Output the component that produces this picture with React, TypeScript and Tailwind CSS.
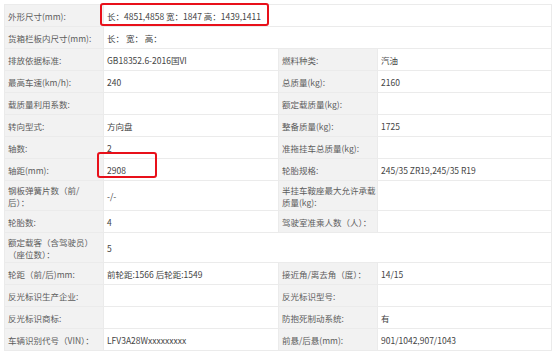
import React from "react";

type Cell = { t: React.ReactNode; label?: boolean; span?: number };

const L = (t: React.ReactNode): Cell => ({ t, label: true });
const V = (t: React.ReactNode, span?: number): Cell => ({ t, span });

const rows: Cell[][] = [
  [L("外形尺寸(mm):"), V("长：4851,4858 宽：1847 高：1439,1411", 3)],
  [L("货箱栏板内尺寸(mm):"), V(<>长：&nbsp;宽：&nbsp;高：</>, 3)],
  [L("排放依据标准:"), V("GB18352.6-2016国VI"), L("燃料种类:"), V("汽油")],
  [L("最高车速(km/h):"), V("240"), L("总质量(kg):"), V("2160")],
  [L("载质量利用系数:"), V(""), L("额定载质量(kg):"), V("")],
  [L("转向型式:"), V("方向盘"), L("整备质量(kg):"), V("1725")],
  [L("轴数:"), V("2"), L("准拖挂车总质量(kg):"), V("")],
  [L("轴距(mm):"), V("2908"), L("轮胎规格:"), V("245/35 ZR19,245/35 R19")],
  [
    L(<>钢板弹簧片数（前/<br />后）：</>),
    V("-/-"),
    L(<>半挂车鞍座最大允许承载<br />质量(kg):</>),
    V(""),
  ],
  [L("轮胎数:"), V("4"), L("驾驶室准乘人数（人）："), V("")],
  [L(<>额定载客（含驾驶员）<br />（座位数）：</>), V("5", 3)],
  [L("轮距（前/后)mm:"), V("前轮距:1566 后轮距:1549"), L("接近角/离去角（度）："), V("14/15")],
  [L("反光标识生产企业:"), V(""), L("反光标识型号:"), V("")],
  [L("反光标识商标:"), V(""), L("防抱死制动系统:"), V("有")],
  [L("车辆识别代号（VIN）："), V("LFV3A28Wxxxxxxxxx"), L("前悬/后悬(mm):"), V("901/1042,907/1043")],
];

export default function App() {
  return (
    <div
      className="relative w-[555px] h-[352px] bg-white overflow-hidden pl-[4px] pt-[4px]"
      style={{ fontFamily: '"Noto Sans CJK SC", "Noto Sans", sans-serif' }}
    >
      <div className="grid w-[548px] grid-cols-[98px_174px_98px_173px] grid-rows-[repeat(8,21px)_29px_21px_29px_repeat(4,21px)] gap-px p-px bg-[#ebebeb] text-[8.5px] leading-[12px]">
        {rows.map((r, i) =>
          r.map((c, j) => (
            <div
              key={i + "-" + j}
              className={
                c.label
                  ? "flex items-center px-[3px] bg-[#f2f2f2] text-[#5c5c5c] whitespace-nowrap"
                  : c.span === 3
                  ? "col-span-3 flex items-center px-[3px] bg-white text-[#444] whitespace-nowrap"
                  : "flex items-center px-[3px] bg-white text-[#444] whitespace-nowrap"
              }
            >
              <span>{c.t}</span>
            </div>
          ))
        )}
      </div>
      <div className="absolute left-[100px] top-[3px] w-[169px] h-[23px] border-[2.5px] border-[#e8101a] rounded-[3px]" />
      <div className="absolute left-[97px] top-[152px] w-[60px] h-[26px] border-[2.5px] border-[#e8101a] rounded-[3px]" />
    </div>
  );
}
